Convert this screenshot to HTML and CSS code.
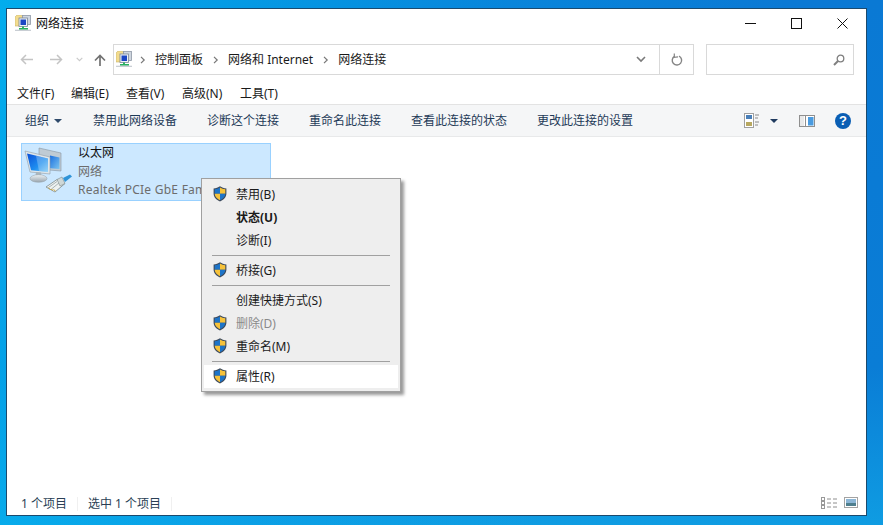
FILE: index.html
```html
<!DOCTYPE html>
<html lang="zh-CN">
<head>
<meta charset="utf-8">
<title>网络连接</title>
<link rel="stylesheet" href="styles.css">
</head>
<body>
<svg class="defs" width="0" height="0" aria-hidden="true">
  <defs>
    <symbol id="shield" viewBox="0 0 14 16">
      <path d="M7 .3C5.2 1.6 3 2.3.6 2.400v5.200c0 3.600 2.700 6.500 6.400 8 3.700-1.500 6.400-4.400 6.400-8V2.400C11 2.300 8.800 1.600 7 .3z" fill="#3d4a5c"/>
      <path d="M7 1.500C5.500 2.500 3.700 3.100 1.700 3.300V7.800H7z" fill="#1d74c8"/>
      <path d="M7 1.500C8.500 2.500 10.300 3.100 12.300 3.300V7.800H7z" fill="#f6c23a"/>
      <path d="M1.700 7.800H7v6.500C4 13 1.800 10.700 1.700 7.800z" fill="#f6c23a"/>
      <path d="M12.300 7.800H7v6.500c3-1.300 5.200-3.600 5.300-6.500z" fill="#1d74c8"/>
    </symbol>
    <symbol id="netsmall" viewBox="0 0 16 16">
      <path d="M0 2 2 0h4l1 1h2v10H0z" fill="#f3dc8e" stroke="#c8b369" stroke-width=".6"/>
      <rect x="7.500" y=".5" width="8" height="9" fill="#cfd6df" stroke="#8e98a6" stroke-width=".8"/>
      <rect x="4" y="3" width="8.500" height="8.500" fill="#eef2f6" stroke="#7b8798" stroke-width=".8"/>
      <rect x="5.500" y="4.500" width="5.500" height="5.500" fill="#1c46c4"/>
      <rect x="7" y="11.500" width="2" height="1.500" fill="#2fb36a"/>
      <rect x="4" y="13" width="9" height="1.700" fill="#27b05f"/>
      <rect x="0" y="14.700" width="16" height="1.300" fill="#c9ced4"/>
    </symbol>
  </defs>
</svg>
<main class="window">
  <header class="titlebar">
    <svg class="ic16 title-icon"><use href="#netsmall"/></svg>
    <span class="title">网络连接</span>
    <div class="caption">
      <button class="cap"><svg width="11" height="11" viewBox="0 0 11 11"><path d="M0 5.500h11" stroke="#111" fill="none"/></svg></button>
      <button class="cap"><svg width="11" height="11" viewBox="0 0 11 11"><rect x=".5" y=".5" width="10" height="10" stroke="#111" fill="none"/></svg></button>
      <button class="cap"><svg width="11" height="11" viewBox="0 0 11 11"><path d="M.5.500l10 10M10.500.500l-10 10" stroke="#111" fill="none"/></svg></button>
    </div>
  </header>

  <div class="navrow">
    <div class="navbtns">
      <svg width="13" height="11" viewBox="0 0 13 11"><path d="M13 5.500H1.500M6 1 1.500 5.500 6 10" stroke="#c4c4c4" stroke-width="1.500" fill="none"/></svg>
      <svg width="13" height="11" viewBox="0 0 13 11"><path d="M0 5.500h11.500M7 1l4.500 4.500L7 10" stroke="#c4c4c4" stroke-width="1.500" fill="none"/></svg>
      <svg width="7" height="5" viewBox="0 0 7 5"><path d="M.7.800 3.500 3.600 6.300.800" stroke="#cacaca" stroke-width="1.200" fill="none"/></svg>
      <svg width="12" height="12" viewBox="0 0 12 12"><path d="M6 12V1.500M1 6.500l5-5 5 5" stroke="#727272" stroke-width="1.700" fill="none"/></svg>
    </div>
    <div class="address">
      <svg class="ic16 addr-icon"><use href="#netsmall"/></svg>
      <svg class="crumb-sep" width="6" height="8" viewBox="0 0 6 8"><path d="M1 .800 4.200 4 1 7.200" stroke="#777" stroke-width="1.200" fill="none"/></svg>
      <span class="crumb">控制面板</span>
      <svg class="crumb-sep" width="6" height="8" viewBox="0 0 6 8"><path d="M1 .800 4.200 4 1 7.200" stroke="#777" stroke-width="1.200" fill="none"/></svg>
      <span class="crumb">网络和 Internet</span>
      <svg class="crumb-sep" width="6" height="8" viewBox="0 0 6 8"><path d="M1 .800 4.200 4 1 7.200" stroke="#777" stroke-width="1.200" fill="none"/></svg>
      <span class="crumb">网络连接</span>
      <span class="spacer"></span>
      <svg class="addr-drop" width="10" height="7" viewBox="0 0 10 7"><path d="M1 1l4 4 4-4" stroke="#7a7a7a" stroke-width="1.600" fill="none"/></svg>
      <span class="refresh">
        <svg width="12" height="13" viewBox="0 0 12 13"><path d="M3.500 3.300A4.700 4.700 0 1 0 8 3.100" stroke="#858585" stroke-width="1.400" fill="none"/><path d="M3.300 0.500 3.300 4.300 7 3.900" stroke="#858585" stroke-width="1.200" fill="none"/></svg>
      </span>
    </div>
    <div class="search">
      <svg width="12" height="12" viewBox="0 0 12 12"><circle cx="7.500" cy="4.500" r="3.300" stroke="#7f7f7f" stroke-width="1.300" fill="none"/><path d="M5 7 1 11" stroke="#7f7f7f" stroke-width="2" fill="none"/></svg>
    </div>
  </div>

  <nav class="menubar">
    <span>文件(F)</span><span>编辑(E)</span><span>查看(V)</span><span>高级(N)</span><span>工具(T)</span>
  </nav>

  <div class="toolbar">
    <span class="tool tool-org">组织<svg class="caret" width="8" height="4" viewBox="0 0 8 4"><path d="M0 0h8L4 4z" fill="#2f4a6b"/></svg></span>
    <span class="tool">禁用此网络设备</span>
    <span class="tool">诊断这个连接</span>
    <span class="tool">重命名此连接</span>
    <span class="tool">查看此连接的状态</span>
    <span class="tool">更改此连接的设置</span>
    <span class="spacer"></span>
    <svg class="view-ic" width="16" height="15" viewBox="0 0 16 15">
      <rect x=".5" y=".5" width="9" height="14" fill="#fff" stroke="#a0a0a0"/>
      <rect x="2" y="2" width="6" height="4" fill="#4a7fb8"/>
      <rect x="2" y="9" width="6" height="4" fill="#b8a860"/>
      <path d="M11 2h4M11 5h3M11 9h4M11 12h3" stroke="#8a8a8a"/>
    </svg>
    <svg class="caret view-caret" width="8" height="4" viewBox="0 0 8 4"><path d="M0 0h8L4 4z" fill="#1f3a5f"/></svg>
    <svg class="pane-ic" width="16" height="12" viewBox="0 0 16 12">
      <rect x=".5" y=".5" width="15" height="11" fill="#fff" stroke="#8f8f8f"/>
      <rect x="1" y="1" width="4" height="10" fill="#e9e9e9"/>
      <rect x="9" y="2" width="5.500" height="8.500" fill="#4a9be0"/>
      <path d="M6.500 1v10" stroke="#8f8f8f"/>
    </svg>
    <span class="help">?</span>
  </div>

  <section class="content">
    <div class="item">
      <svg class="item-icon" width="48" height="48" viewBox="0 0 48 48">
        <defs>
          <linearGradient id="st" x1="0" y1="0" x2="0" y2="1"><stop offset="0" stop-color="#eef3f6"/><stop offset="1" stop-color="#98a4ad"/></linearGradient>
          <linearGradient id="scrA" x1="0" y1="0" x2="1" y2="1"><stop offset="0" stop-color="#0a4fd8"/><stop offset=".6" stop-color="#1f8ff0"/><stop offset="1" stop-color="#7cc8f5"/></linearGradient>
          <linearGradient id="scrB" x1="0" y1="0" x2="1" y2="1"><stop offset="0" stop-color="#1a6fe0"/><stop offset="1" stop-color="#7cc4ef"/></linearGradient>
        </defs>
        <path d="M15 3 37 8V26L25 25V14L15 12z" fill="#bfcbd4" stroke="#8896a2" stroke-width=".6"/>
        <path d="M26 10.500 35.500 12.500V24L26 23.200z" fill="url(#scrB)"/>
        <path d="M1 6 26 12V29L6 27z" fill="#dfe6ea" stroke="#8f9ca6" stroke-width=".6"/>
        <path d="M3 8.500 24 13.500V27L7 25.300z" fill="url(#scrA)"/>
        <path d="M12 10.700 24 13.500V27L15 26z" fill="#d9f0fd" opacity=".3"/>
        <path d="M12 27l5 .5.500 4-6-.5z" fill="#a9b5bd"/>
        <ellipse cx="14.500" cy="33.500" rx="8.500" ry="3.800" fill="url(#st)" stroke="#94a0a8" stroke-width=".5"/>
        <path d="M22 42 33 34.500 41 38.500 31 47z" fill="#eef2f1" stroke="#7c8a8c" stroke-width=".8"/>
        <path d="M24.500 42.500 33 36.500M27.500 44 35.500 37.500" stroke="#8a9799" stroke-width=".7" fill="none"/>
        <path d="M26.500 44.500l-2-1.500M29 45.500l-2-1.500M31.500 46l-2-1.500" stroke="#c7a545" stroke-width="1"/>
        <path d="M33 34.500 38 32 41 38.500 36 41z" fill="#cfd8d8" stroke="#7c8a8c" stroke-width=".6"/>
        <path d="M39 33 46 29.500 48 31.500 41 37z" fill="#2f94d8"/>
      </svg>
      <div class="item-text">
        <div class="item-name">以太网</div>
        <div class="item-sub">网络</div>
        <div class="item-sub item-wide">Realtek PCIe GbE Fam</div>
      </div>
    </div>
  </section>

  <footer class="statusbar">
    <span class="status-cell">1 个项目</span>
    <span class="status-cell">选中 1 个项目</span>
    <span class="spacer"></span>
    <svg class="status-ic" width="16" height="12" viewBox="0 0 16 12">
      <rect x=".5" y=".5" width="3" height="3" fill="#fff" stroke="#999"/><rect x=".5" y="4.500" width="3" height="3" fill="#fff" stroke="#999"/><rect x=".5" y="8.500" width="3" height="3" fill="#fff" stroke="#999"/>
      <path d="M6 2h4M12 2h4M6 6h4M12 6h4M6 10h4M12 10h4" stroke="#8e8e8e"/>
    </svg>
    <svg class="status-ic thumb-ic" width="14" height="11" viewBox="0 0 14 11">
      <rect x=".5" y=".5" width="13" height="10" fill="#fff" stroke="#a3a3a3"/>
      <rect x="2" y="2" width="10" height="4" fill="#8cb6d6"/><rect x="2" y="6" width="10" height="3" fill="#4f7f8e"/>
    </svg>
  </footer>
</main>

<div class="ctx">
  <div class="ctx-row"><svg class="shield"><use href="#shield"/></svg>禁用(B)</div>
  <div class="ctx-row ctx-bold">状态(U)</div>
  <div class="ctx-row">诊断(I)</div>
  <div class="ctx-sep"></div>
  <div class="ctx-row"><svg class="shield"><use href="#shield"/></svg>桥接(G)</div>
  <div class="ctx-sep"></div>
  <div class="ctx-row">创建快捷方式(S)</div>
  <div class="ctx-row ctx-off"><svg class="shield"><use href="#shield"/></svg>删除(D)</div>
  <div class="ctx-row"><svg class="shield"><use href="#shield"/></svg>重命名(M)</div>
  <div class="ctx-sep"></div>
  <div class="ctx-row ctx-hot"><svg class="shield"><use href="#shield"/></svg>属性(R)</div>
</div>
</body>
</html>
```
FILE: styles.css
```css
* { box-sizing: border-box; }
html, body { height: 100%; }
body {
  margin: 0;
  width: 883px;
  height: 525px;
  overflow: hidden;
  position: relative;
  padding: 8px 16px 9px 6px;
  display: flex;
  font: 12px/16px "Noto Sans", "Noto Sans CJK SC", sans-serif;
  color: #1a1a1a;
  background:
    linear-gradient(115deg, rgba(0,190,245,.75) 0%, rgba(0,170,240,.25) 45%, rgba(0,120,215,0) 70%),
    linear-gradient(180deg, #0a79d4 0%, #0a7dd6 70%, #0f9ce2 100%);
}
.defs { position: absolute; }
.spacer { flex: 1; }
.ic16 { width: 16px; height: 16px; flex: none; }

.window {
  flex: 1;
  display: flex;
  flex-direction: column;
  background: #fff;
  border: 1px solid #1b4a6e;
}
.titlebar {
  height: 29px;
  display: flex;
  align-items: center;
  padding-left: 8px;
  flex: none;
}
.title-icon { margin-top: -1px; }
.title { margin-left: 5px; font-size: 12px; color: #111; }
.caption { margin-left: auto; display: flex; align-items: center; padding-right: 1px; }
.cap {
  width: 46px;
  height: 29px;
  border: 0;
  padding: 0;
  background: none;
  display: flex;
  align-items: center;
  justify-content: center;
}

.navrow {
  flex: none;
  height: 46px;
  display: flex;
  align-items: flex-start;
  padding: 6px 12px 0 0;
}
.navbtns {
  width: 106px;
  height: 31px;
  flex: none;
  display: flex;
  align-items: center;
  padding-left: 13px;
}
.navbtns svg:nth-child(2) { margin-left: 17px; }
.navbtns svg:nth-child(3) { margin-left: 13px; }
.navbtns svg:nth-child(4) { margin-left: 11px; }
.address {
  width: 581px;
  height: 31px;
  border: 1px solid #d9d9d9;
  display: flex;
  align-items: center;
  padding-left: 2px;
  flex: none;
}
.addr-icon { margin-right: 8px; margin-top: -2px; }
.crumb-sep { flex: none; margin-right: 9px; }
.crumb { margin-right: 10px; white-space: nowrap; color: #1a1a1a; }
.addr-drop { margin-right: 13px; }
.refresh {
  width: 34px;
  height: 29px;
  border-left: 1px solid #d9d9d9;
  display: flex;
  align-items: center;
  justify-content: center;
  flex: none;
}
.search {
  width: 148px;
  height: 31px;
  margin-left: 12px;
  border: 1px solid #d9d9d9;
  display: flex;
  align-items: center;
  justify-content: flex-end;
  padding-right: 8px;
  flex: none;
}

.menubar {
  flex: none;
  height: 20px;
  display: flex;
  align-items: center;
  padding-left: 10px;
  color: #1a1a1a;
}
.menubar span { white-space: nowrap; }
.menubar span:nth-child(1) { width: 54px; }
.menubar span:nth-child(2) { width: 55px; }
.menubar span:nth-child(3) { width: 56px; }
.menubar span:nth-child(4) { width: 58px; }
.toolbar {
  flex: none;
  height: 33px;
  display: flex;
  align-items: center;
  padding: 0 15px 0 18px;
  background: #f5f6f7;
  border-top: 1px solid #e3e3e3;
  border-bottom: 1px solid #e8e9ea;
  color: #1e3a57;
}
.tool { white-space: nowrap; margin-right: 30px; display: flex; align-items: center; }
.tool-org { margin-right: 31px; }
.caret { margin-left: 5px; flex: none; }
.view-caret { margin-left: 10px; }
.pane-ic { margin-left: 21px; }
.help {
  width: 16px;
  height: 16px;
  margin-left: 20px;
  border-radius: 50%;
  background: #0a5eb4;
  color: #fff;
  font: bold 13px/16px "Liberation Sans", sans-serif;
  text-align: center;
}

.content { flex: 1; padding: 6px 14px; }
.item {
  position: relative;
  width: 250px;
  height: 58px;
  display: flex;
  background: #cce8ff;
  border: 1px solid #99d1ff;
  padding: 1px 0 0 2px;
  overflow: hidden;
}
.item-icon { flex: none; }
.item-text { margin: -1px 0 0 6px; line-height: 18px; white-space: nowrap; }
.item-name { color: #111; margin-bottom: 1px; }
.item-sub { color: #6d6d6d; }
.item-wide { letter-spacing: .25px; }

.statusbar {
  flex: none;
  height: 26px;
  display: flex;
  align-items: center;
  padding: 4px 8px 0 14px;
  color: #2a3f55;
}
.status-cell {
  height: 14px;
  line-height: 14px;
  padding-right: 10px;
  margin-right: 10px;
  border-right: 1px solid #f0f0f0;
  white-space: nowrap;
}
.status-ic { margin-top: -3px; }
.thumb-ic { margin-left: 7px; }

.ctx {
  position: absolute;
  left: 201px;
  top: 178px;
  width: 200px;
  padding: 4px 2px 3px;
  background: #eeeeee;
  border: 1px solid #a0a0a0;
  box-shadow: 3px 3px 3px rgba(0,0,0,.4);
}
.ctx-row {
  height: 23px;
  position: relative;
  padding-left: 32px;
  line-height: 23px;
  color: #1a1a1a;
  white-space: nowrap;
}
.ctx-bold { font-weight: 700; }
.ctx-off { color: #8a8a8a; }
.ctx-hot { background: #fff; }
.ctx-sep { height: 1px; margin: 3px 8px 3px 8px; background: #a0a0a0; }
.shield {
  position: absolute;
  left: 9px;
  top: 3px;
  width: 14px;
  height: 16px;
}
```
